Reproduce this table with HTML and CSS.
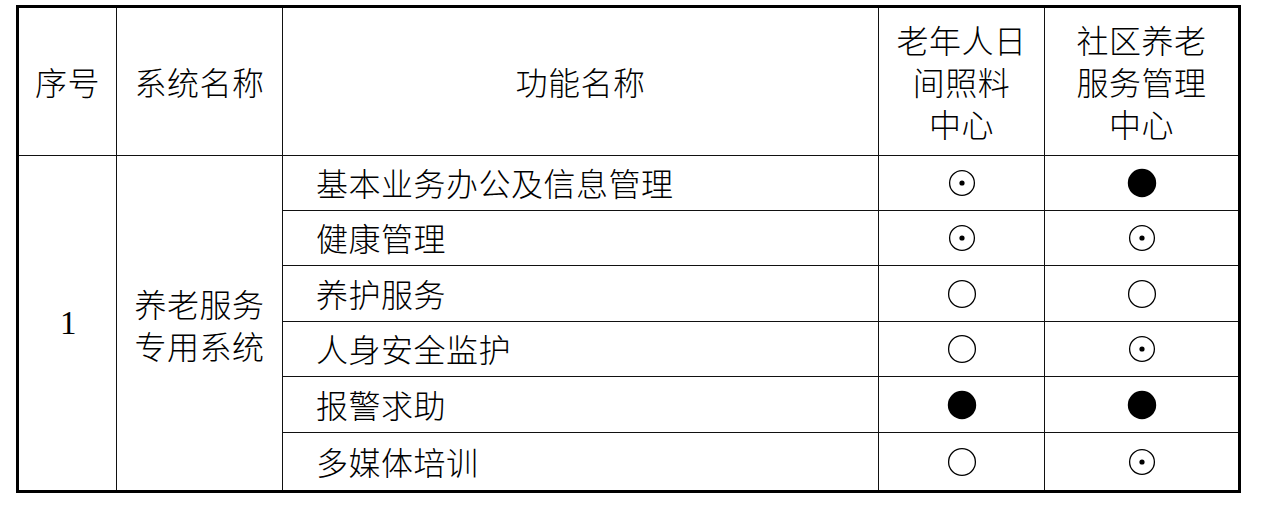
FILE: index.html
```html
<!DOCTYPE html>
<html lang="zh-CN">
<head>
<meta charset="utf-8">
<title>养老服务专用系统</title>
<link rel="stylesheet" href="styles.css">
</head>
<body>
<svg width="0" height="0" class="defs" aria-hidden="true">
  <defs>
    <symbol id="dot" viewBox="0 0 30 30"><circle cx="15" cy="15" r="12.4" fill="none" stroke="#000" stroke-width="1.3"/><circle cx="15" cy="15" r="2.6" fill="#000"/></symbol>
    <symbol id="full" viewBox="0 0 30 30"><circle cx="15" cy="15" r="14.2" fill="#000"/></symbol>
    <symbol id="empty" viewBox="0 0 30 30"><circle cx="15" cy="15" r="13.4" fill="none" stroke="#000" stroke-width="1.3"/></symbol>
  </defs>
</svg>
<div class="sheet">
  <div class="cell head">序号</div>
  <div class="cell head">系统名称</div>
  <div class="cell head">功能名称</div>
  <div class="cell head multi"><span class="ln">老年人日</span><span class="ln">间照料</span><span class="ln">中心</span></div>
  <div class="cell head multi last"><span class="ln">社区养老</span><span class="ln">服务管理</span><span class="ln">中心</span></div>

  <div class="cell span num">1</div>
  <div class="cell span sys"><span class="ln">养老服务</span><span class="ln">专用系统</span></div>

  <div class="cell func">基本业务办公及信息管理</div>
  <div class="cell mark"><svg><use href="#dot"/></svg></div>
  <div class="cell mark last"><svg><use href="#full"/></svg></div>

  <div class="cell func">健康管理</div>
  <div class="cell mark"><svg><use href="#dot"/></svg></div>
  <div class="cell mark last"><svg><use href="#dot"/></svg></div>

  <div class="cell func">养护服务</div>
  <div class="cell mark"><svg><use href="#empty"/></svg></div>
  <div class="cell mark last"><svg><use href="#empty"/></svg></div>

  <div class="cell func">人身安全监护</div>
  <div class="cell mark"><svg><use href="#empty"/></svg></div>
  <div class="cell mark last"><svg><use href="#dot"/></svg></div>

  <div class="cell func">报警求助</div>
  <div class="cell mark"><svg><use href="#full"/></svg></div>
  <div class="cell mark last"><svg><use href="#full"/></svg></div>

  <div class="cell func bottom">多媒体培训</div>
  <div class="cell mark bottom"><svg><use href="#empty"/></svg></div>
  <div class="cell mark last bottom"><svg><use href="#dot"/></svg></div>
</div>
</body>
</html>
```
FILE: styles.css
```css
html, body {
  margin: 0;
  padding: 0;
  background: #fff;
}

body {
  font-family: "Noto Sans CJK SC", "Noto Sans", sans-serif;
  font-weight: 300;
  color: #000;
}

.defs {
  position: absolute;
  width: 0;
  height: 0;
  overflow: hidden;
}

.sheet {
  margin: 5px 0 0 16px;
  width: 1225px;
  box-sizing: border-box;
  border: 3px solid #000;
  display: grid;
  grid-template-columns: 98px 166px 596px 166px 193px;
  grid-template-rows: 148px 55px 55px 56px 55px 56px 57px;
}

.cell {
  box-sizing: border-box;
  border-right: 1px solid #111;
  border-bottom: 1px solid #111;
  display: flex;
  align-items: center;
  justify-content: center;
  text-align: center;
  font-size: 32px;
  letter-spacing: 0.5px;
  line-height: 42px;
  padding-bottom: 2px;
}

.cell.last {
  border-right: none;
}

.cell.bottom {
  border-bottom: none;
}

.head {
  border-bottom-width: 1.5px;
}

.head.multi,
.sys {
  flex-direction: column;
}

.ln {
  display: block;
  height: 42px;
  line-height: 42px;
  white-space: nowrap;
}

.span {
  grid-row: 2 / span 6;
  border-bottom: none;
}

.num {
  font-family: "Liberation Serif", "Times New Roman", serif;
  font-weight: 400;
  font-size: 33px;
  padding-left: 2px;
  padding-bottom: 0;
}

.sys {
  padding-bottom: 0;
  padding-top: 1px;
}

.func {
  justify-content: flex-start;
  padding-left: 33px;
  text-align: left;
}

.mark {
  padding-bottom: 0;
}

.mark svg {
  width: 30px;
  height: 30px;
  display: block;
}
```
